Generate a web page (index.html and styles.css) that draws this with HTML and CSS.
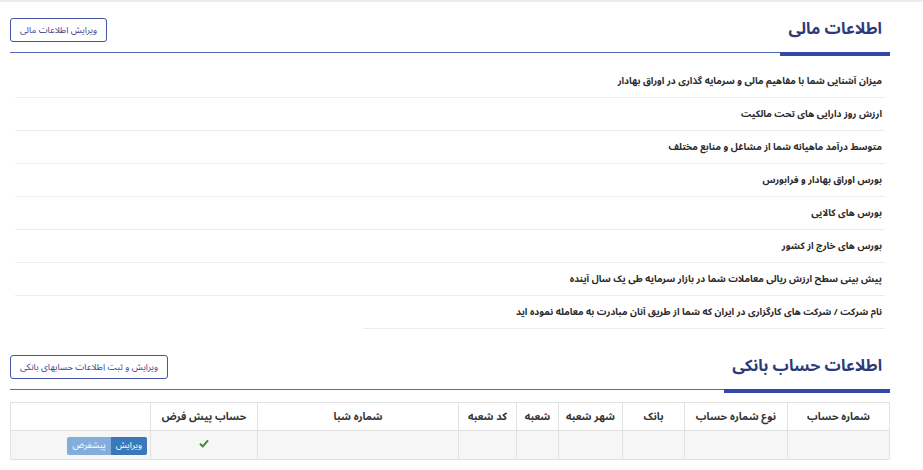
FILE: index.html
```html
<!DOCTYPE html>
<html lang="fa" dir="rtl">
<head>
    <meta charset="UTF-8">
    <title>اطلاعات مالی</title>
    <link rel="stylesheet" href="styles.css">
</head>
<body>
    <div class="page">
        <div class="section">
            <div class="section-head">
                <h2 class="section-title">اطلاعات مالی</h2>
                <button class="edit-btn">ویرایش اطلاعات مالی</button>
            </div>
            <ul class="info-list">
                <li>میزان آشنایی شما با مفاهیم مالی و سرمایه گذاری در اوراق بهادار</li>
                <li>ارزش روز دارایی های تحت مالکیت</li>
                <li>متوسط درآمد ماهیانه شما از مشاغل و منابع مختلف</li>
                <li>بورس اوراق بهادار و فرابورس</li>
                <li>بورس های کالایی</li>
                <li>بورس های خارج از کشور</li>
                <li>پیش بینی سطح ارزش ریالی معاملات شما در بازار سرمایه طی یک سال آینده</li>
                <li class="last">نام شرکت / شرکت های کارگزاری در ایران که شما از طریق آنان مبادرت به معامله نموده اید</li>
            </ul>
        </div>

        <div class="section bank">
            <div class="section-head">
                <h2 class="section-title">اطلاعات حساب بانکی</h2>
                <button class="edit-btn">ویرایش و ثبت اطلاعات حسابهای بانکی</button>
            </div>
            <table class="bank-table">
                <tr>
                    <th class="c-acc">شماره حساب</th>
                    <th class="c-type">نوع شماره حساب</th>
                    <th class="c-bank">بانک</th>
                    <th class="c-city">شهر شعبه</th>
                    <th class="c-branch">شعبه</th>
                    <th class="c-code">کد شعبه</th>
                    <th class="c-sheba">شماره شبا</th>
                    <th class="c-def">حساب پیش فرض</th>
                    <th></th>
                </tr>
                <tr class="body-row">
                    <td></td>
                    <td></td>
                    <td></td>
                    <td></td>
                    <td></td>
                    <td></td>
                    <td></td>
                    <td class="check">
                        <svg width="10" height="9" viewBox="0 0 10 9"><path d="M1 4.8 L3.8 7.4 L9 1.4" fill="none" stroke="#3c8a2e" stroke-width="2"/></svg>
                    </td>
                    <td class="actions">
                        <span class="btn-group"><span class="btn blue">ویرایش</span><span class="btn light">پیشفرض</span></span>
                    </td>
                </tr>
            </table>
        </div>
    </div>
</body>
</html>
```

FILE: styles.css
```css
html, body {
    margin: 0;
    background: #fff;
}

body {
    font-family: "Noto Sans Arabic", "Noto Naskh Arabic", "Vazirmatn", "DejaVu Sans", sans-serif;
    color: #333;
    border-top: 2px solid #ececec;
}

.page {
    padding: 0 33px 0 10px;
}

.section-head {
    display: flex;
    justify-content: space-between;
    align-items: flex-end;
    border-bottom: 1.5px solid #5868b8;
    padding-top: 10px;
}

.section-title {
    margin: 0 0 -4px 0;
    padding: 0 8px 6px 8px;
    border-bottom: 4px solid #3548a8;
    font-size: 16px;
    font-weight: bold;
    color: #2d3a78;
}

.edit-btn {
    margin-bottom: 10px;
    padding: 0 9px;
    height: 24px;
    background: #fff;
    border: 1.5px solid #4656a6;
    border-radius: 3px;
    font-family: inherit;
    font-size: 9px;
    color: #3b3f8a;
}

.info-list {
    list-style: none;
    margin: 12px 5px 0 5px;
    padding: 0;
}

.info-list li {
    padding: 8px 3px 8px 0;
    line-height: 16px;
    font-size: 9.5px;
    font-weight: bold;
    color: #2a2a2a;
    border-bottom: 1px solid #ececec;
}

.info-list li.last {
    margin-left: 348px;
}

.bank {
    margin-top: 10px;
}

.bank-table {
    width: 100%;
    margin-top: 12px;
    border-collapse: collapse;
    font-size: 10.5px;
}

.bank-table th,
.bank-table td {
    border: 1px solid #e2e2e2;
    text-align: center;
    padding: 0 3px;
}

.bank-table th {
    height: 27px;
    font-weight: bold;
    color: #333;
}

.body-row td {
    height: 28px;
    background: #f6f6f6;
}

.c-acc { width: 95px; }
.c-type { width: 96px; }
.c-bank { width: 55px; }
.c-city { width: 57px; }
.c-branch { width: 35px; }
.c-code { width: 51px; }
.c-sheba { width: 194px; }
.c-def { width: 100px; }

.actions {
    text-align: right !important;
}

.btn-group {
    display: inline-flex;
}

.btn {
    display: inline-block;
    padding: 0 5px;
    line-height: 18px;
    font-size: 9px;
    color: #fff;
}

.btn.blue {
    background: #3a78b8;
    border-radius: 0 2px 2px 0;
}

.btn.light {
    background: #83aedb;
    border-radius: 2px 0 0 2px;
}
```
